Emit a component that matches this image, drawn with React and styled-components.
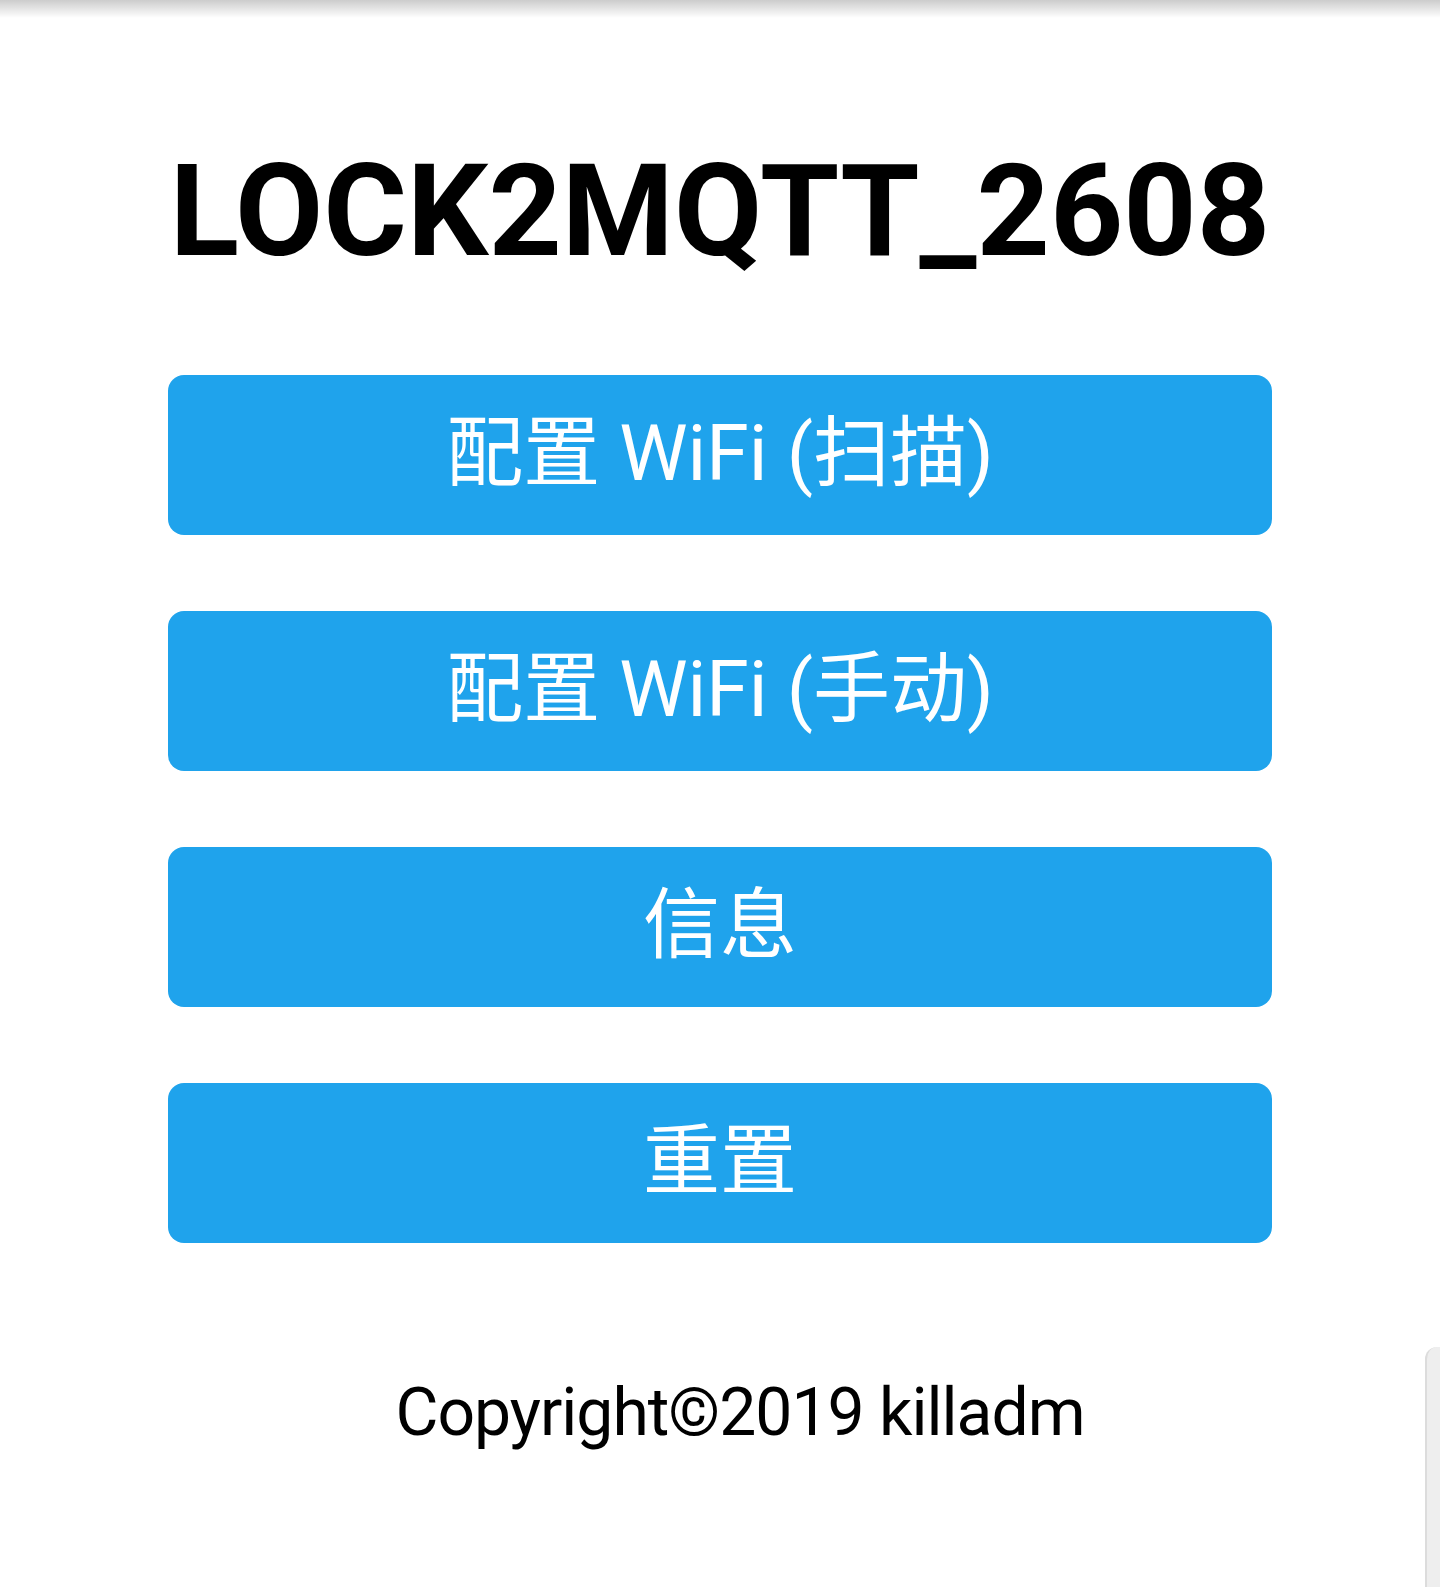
import React from 'react';
import styled, { createGlobalStyle } from 'styled-components';

const Global = createGlobalStyle`
  html, body {
    margin: 0;
    padding: 0;
    background: #fff;
  }
  body {
    font-family: Roboto, "Noto Sans CJK SC", "Noto Sans", sans-serif;
  }
`;

const Page = styled.div`
  position: relative;
  min-height: 1587px;
  overflow: hidden;
  display: flex;
  flex-direction: column;
  align-items: center;
`;

const TopShadow = styled.div`
  position: absolute;
  top: 0;
  left: 0;
  right: 0;
  height: 18px;
  background: linear-gradient(rgba(0, 0, 0, 0.2), rgba(0, 0, 0, 0));
`;

const Title = styled.h1`
  margin: 0;
  padding-top: 136px;
  font-size: 128px;
  font-weight: 700;
  line-height: 150px;
  color: #000;
  text-align: center;
`;

const Menu = styled.div`
  width: 1104px;
  margin-top: 89px;
  display: flex;
  flex-direction: column;
  gap: 76px;
`;

const Button = styled.button`
  height: 160px;
  padding: 0 0 18px;
  border: 0;
  border-radius: 16px;
  background-color: #1fa3ec;
  color: #fff;
  font-family: Roboto, "Noto Sans CJK SC", sans-serif;
  font-size: 77px;
  display: flex;
  align-items: center;
  justify-content: center;
  cursor: pointer;
`;

const Footer = styled.div`
  margin-top: 130px;
  padding-left: 40px;
  font-size: 66px;
  letter-spacing: -1px;
  line-height: 80px;
  color: #000;
  text-align: center;
`;

const EdgeTab = styled.div`
  position: absolute;
  right: 0;
  top: 1347px;
  bottom: 0;
  width: 13px;
  background: #eeeeee;
  border-left: 2px solid #dcdcdc;
  border-top-left-radius: 12px;
`;

const items = ['配置 WiFi (扫描)', '配置 WiFi (手动)', '信息', '重置'];

export default function App() {
  return (
    <Page>
      <Global />
      <TopShadow />
      <Title>LOCK2MQTT_2608</Title>
      <Menu>
        {items.map(label => (
          <Button key={label}>{label}</Button>
        ))}
      </Menu>
      <Footer>Copyright©2019 killadm</Footer>
      <EdgeTab />
    </Page>
  );
}
